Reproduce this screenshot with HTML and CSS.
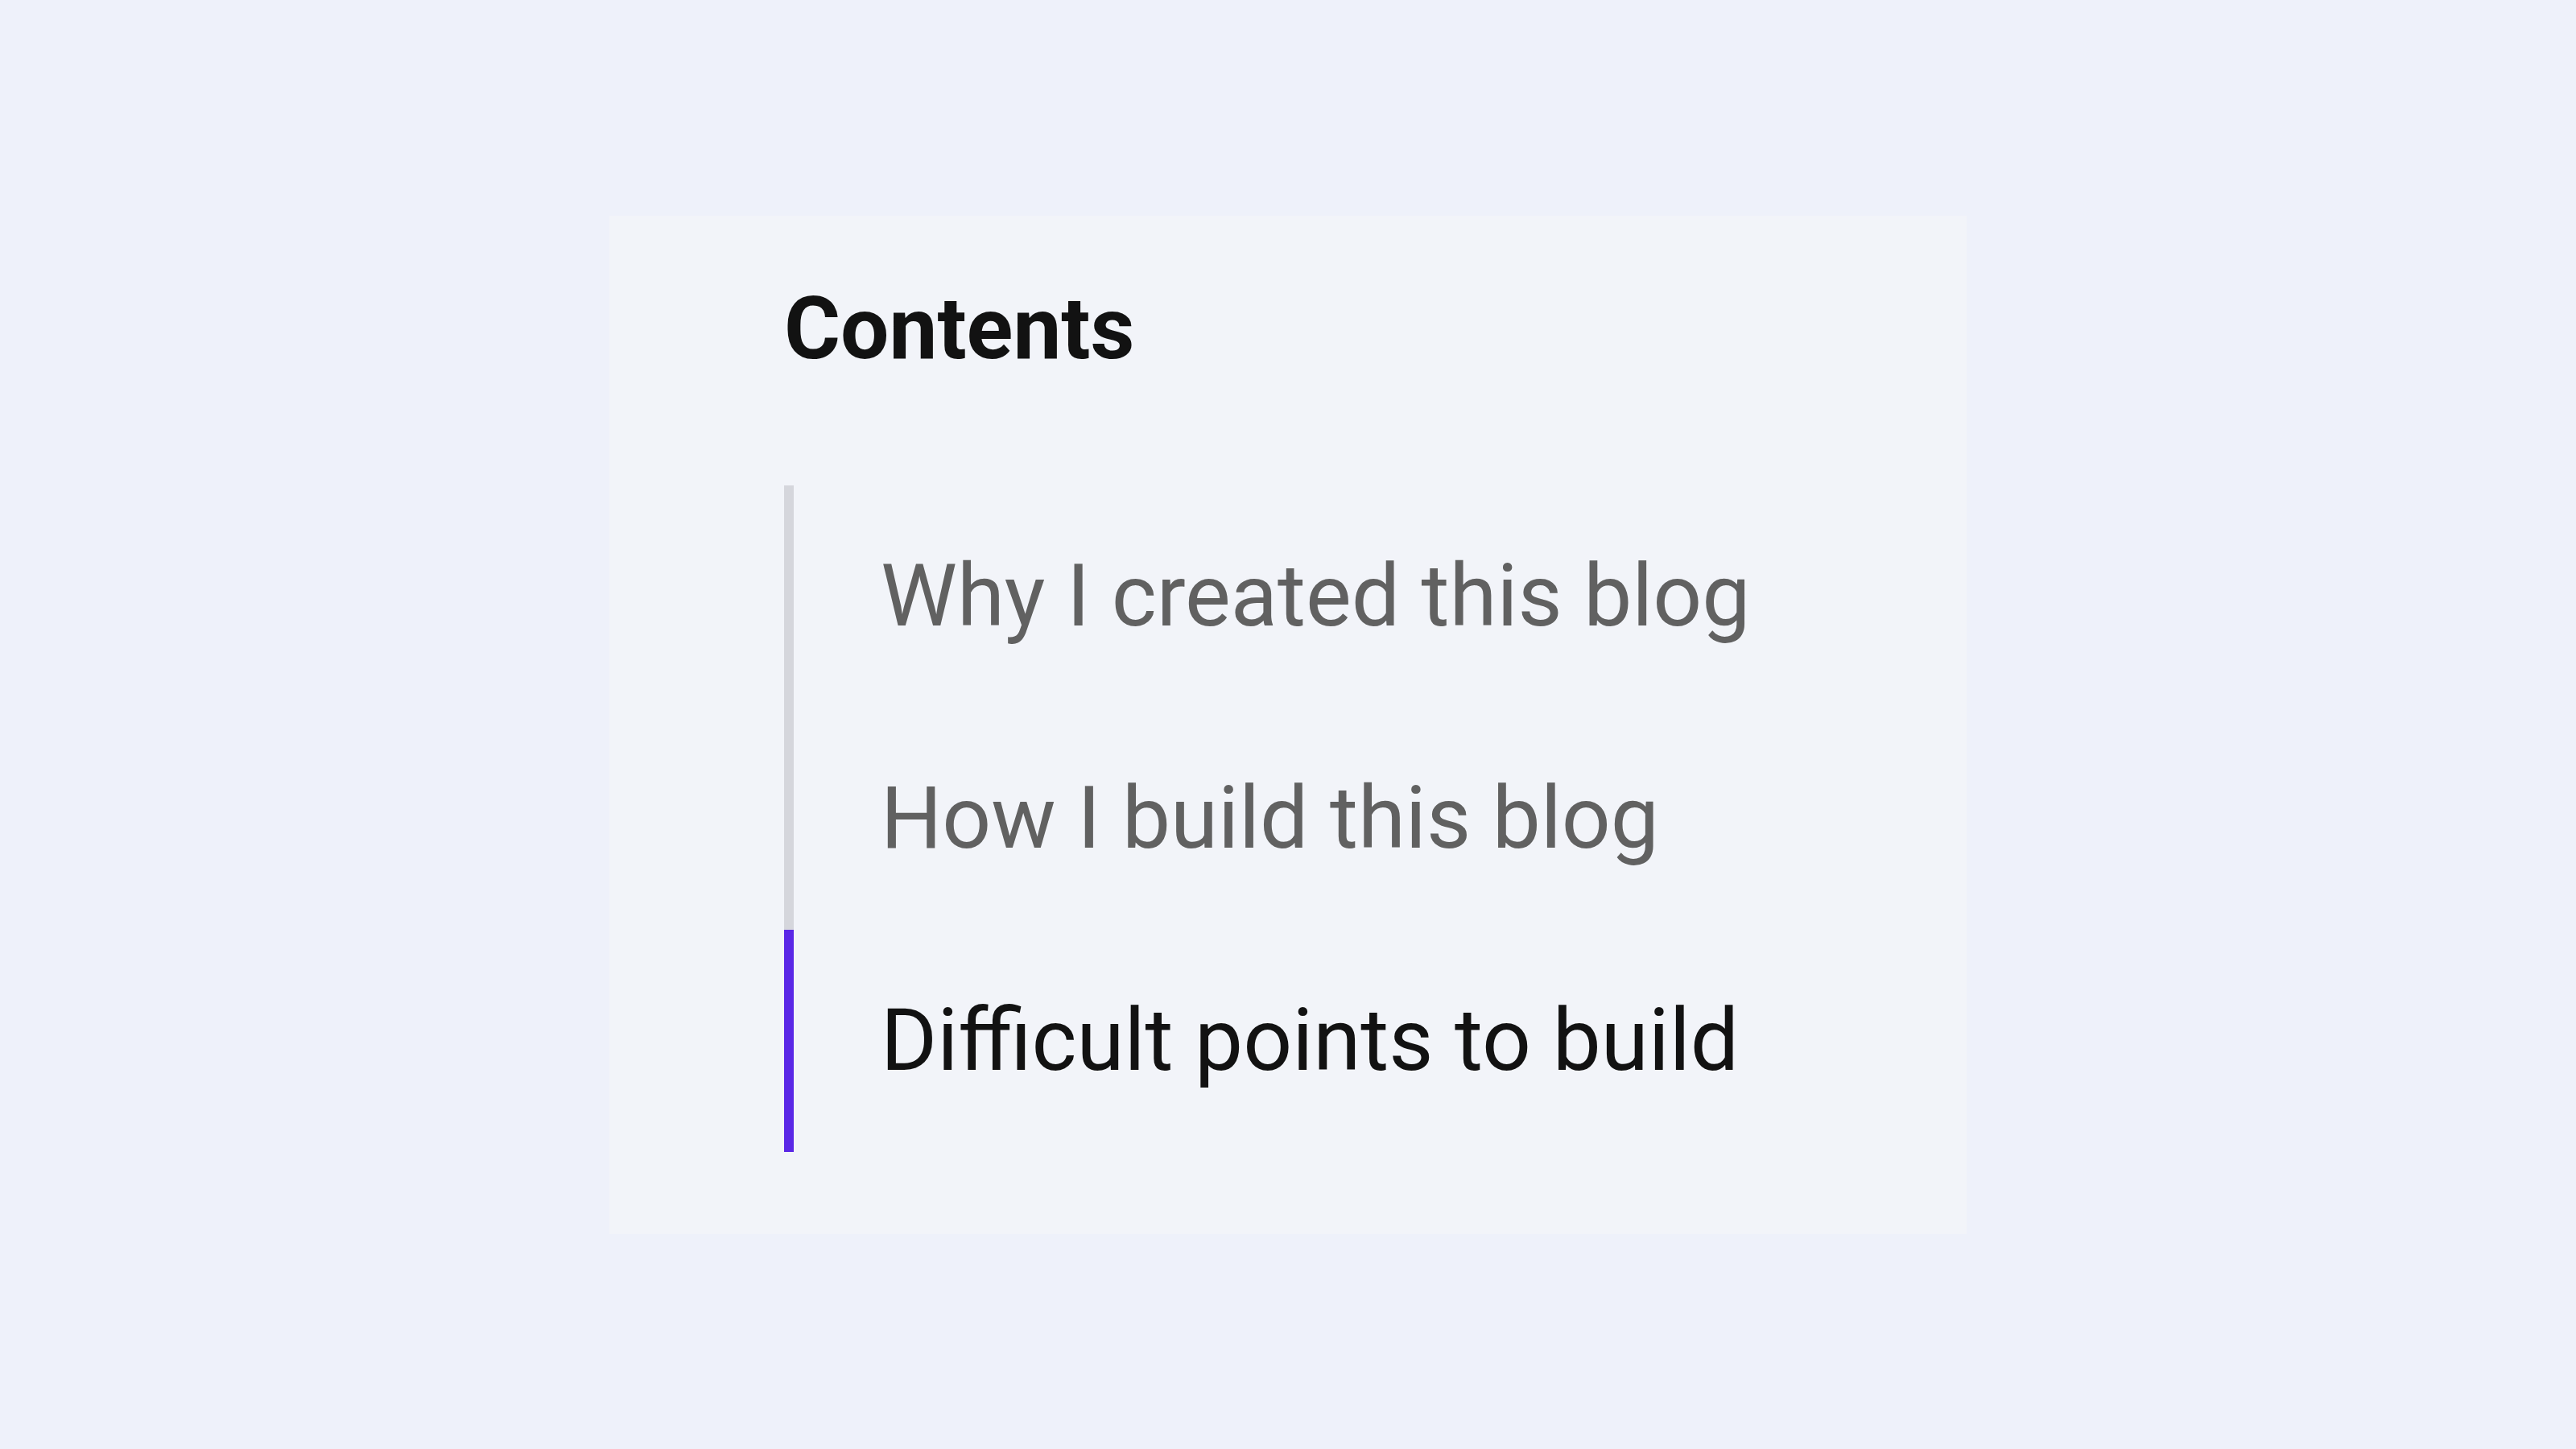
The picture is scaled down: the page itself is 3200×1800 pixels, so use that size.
FILE: index.html
```html
<!DOCTYPE html>
<html lang="en">
<head>
  <meta charset="UTF-8">
  <title>Contents</title>
  <link rel="stylesheet" href="styles.css">
</head>
<body>
  <div class="page">
    <nav class="toc">
      <h2 class="toc-title">Contents</h2>
      <ul class="toc-list">
        <li class="toc-item"><a href="#why">Why I created this blog</a></li>
        <li class="toc-item"><a href="#how">How I build this blog</a></li>
        <li class="toc-item active"><a href="#difficult">Difficult points to build</a></li>
      </ul>
    </nav>
  </div>
</body>
</html>
```

FILE: styles.css
```css
html, body {
  margin: 0;
  padding: 0;
}
body {
  background: #eef1fa;
  font-family: Roboto, "Liberation Sans", sans-serif;
}
.page {
  height: 100vh;
  display: flex;
  align-items: center;
  justify-content: center;
}
.toc {
  width: 1686px;
  box-sizing: border-box;
  background: #f2f4f9;
  padding: 78px 217px 102px;
}
.toc-title {
  margin: 0 0 132px;
  font-size: 107px;
  font-weight: 700;
  line-height: normal;
  color: #121212;
}
.toc-list {
  list-style: none;
  margin: 0;
  padding: 0;
}
.toc-item {
  height: 276px;
  display: flex;
  align-items: center;
  border-left: 12px solid #d5d6dc;
  padding-left: 108px;
}
.toc-item a {
  font-size: 107px;
  line-height: normal;
  color: #616161;
  text-decoration: none;
}
.toc-item.active {
  border-left-color: #5a27e6;
}
.toc-item.active a {
  color: #121212;
}
```
